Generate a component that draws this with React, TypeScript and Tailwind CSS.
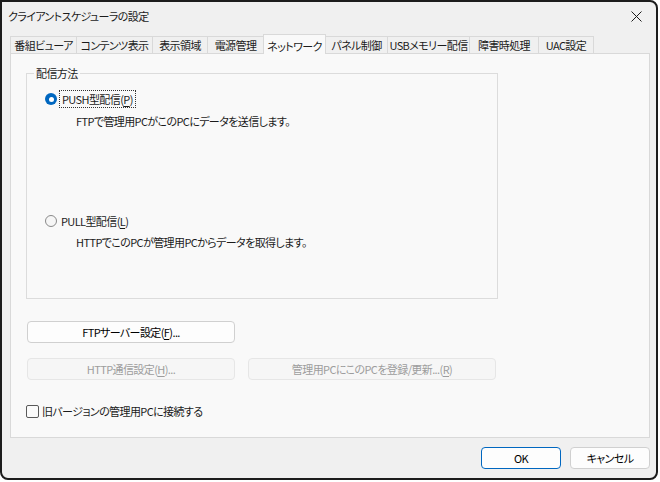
import type { ReactNode } from "react";

const tabs = [
  { label: "番組ビューア", width: 67 },
  { label: "コンテンツ表示", width: 77 },
  { label: "表示領域", width: 56 },
  { label: "電源管理", width: 57 },
  { label: "ネットワーク", width: 63 },
  { label: "パネル制御", width: 63 },
  { label: "USBメモリー配信", width: 83 },
  { label: "障害時処理", width: 70 },
  { label: "UAC設定", width: 56 },
];

const Key = ({ children }: { children: ReactNode }) => (
  <span className="underline underline-offset-2">{children}</span>
);

const Button = ({
  children,
  disabled,
  primary,
  className = "",
}: {
  children: ReactNode;
  disabled?: boolean;
  primary?: boolean;
  className?: string;
}) => (
  <div
    className={`flex h-[22px] items-center justify-center rounded-[4px] border ${
      disabled
        ? "border-[#e6e6e6] bg-[#f6f6f6] text-[#9d9d9d]"
        : primary
          ? "border-[#0067c0] bg-[#fdfdfd] text-black"
          : "border-[#d0d0d0] bg-[#fdfdfd] text-black"
    } ${className}`}
  >
    {children}
  </div>
);

export default function App() {
  return (
    <div className="h-[482px] w-[660px] whitespace-nowrap bg-white font-['Noto_Sans_CJK_JP',sans-serif] text-[11px] leading-[16px] tracking-[-0.6px] text-[#1b1b1b] [font-feature-settings:'palt']">
      <div className="flex h-[480px] w-[658px] flex-col overflow-hidden rounded-r-[8px] rounded-bl-[8px] border-2 border-[#1c1c1c] bg-[#f0f0f0]">
        {/* title bar */}
        <div className="flex h-[28px] shrink-0 items-center justify-between pl-[6px] pr-[14px]">
          <span>クライアントスケジューラの設定</span>
          <svg width="11" height="11" viewBox="0 0 11 11">
            <path d="M0.5 0.5 L10.5 10.5 M10.5 0.5 L0.5 10.5" stroke="#1c1c1c" strokeWidth="1" />
          </svg>
        </div>

        {/* tabs */}
        <div className="ml-[8px] mt-[6px] flex h-[17px] items-end">
          {tabs.map((tab) => {
            const active = tab.label === "ネットワーク";
            return (
              <div
                key={tab.label}
                style={{ width: tab.width }}
                className={`flex items-center justify-center border-x border-t border-[#d9d9d9] ${
                  active
                    ? "relative z-10 -mb-px -ml-px h-[20px] bg-[#f9f9f9] pt-[2px]"
                    : "-ml-px h-[17px] bg-[#f0f0f0] first:ml-0"
                }`}
              >
                <span>{tab.label}</span>
              </div>
            );
          })}
        </div>

        {/* tab page */}
        <div className="ml-[8px] flex h-[385px] w-[640px] flex-col border border-[#d9d9d9] bg-[#f9f9f9] pl-[15px]">
          <fieldset className="mt-[11px] h-[234px] w-[472px] border border-[#dcdcdc] pl-[18px]">
            <legend className="-ml-[11px] px-[2px]">配信方法</legend>

            <div className="mt-[9px] flex items-center">
              <span className="flex h-[12px] w-[12px] items-center justify-center rounded-full bg-[#0067c0]">
                <span className="h-[5px] w-[5px] rounded-full bg-white" />
              </span>
              <span className="ml-[2px] border border-dotted border-[#333] px-[2px]">
                PUSH型配信(<Key>P</Key>)
              </span>
            </div>
            <div className="ml-[31px] mt-[5px]">FTPで管理用PCがこのPCにデータを送信します。</div>

            <div className="mt-[84px] flex items-center">
              <span className="h-[12px] w-[12px] rounded-full border border-[#8a8a8a] bg-[#f6f6f6]" />
              <span className="ml-[3px] px-px">
                PULL型配信(<Key>L</Key>)
              </span>
            </div>
            <div className="ml-[31px] mt-[5px]">HTTPでこのPCが管理用PCからデータを取得します。</div>
          </fieldset>

          <Button className="ml-px mt-[22px] w-[208px]">
            <span>
              FTPサーバー設定(<Key>F</Key>)...
            </span>
          </Button>

          <div className="ml-px mt-[15px] flex gap-[13px]">
            <Button disabled className="w-[208px]">
              <span>
                HTTP通信設定(<Key>H</Key>)...
              </span>
            </Button>
            <Button disabled className="w-[248px]">
              <span>
                管理用PCにこのPCを登録/更新...(<Key>R</Key>)
              </span>
            </Button>
          </div>

          <div className="mt-[23px] flex items-center">
            <span className="h-[13px] w-[13px] rounded-[2px] border border-[#5a5a5a] bg-[#fbfbfb]" />
            <span className="ml-[3px]">旧バージョンの管理用PCに接続する</span>
          </div>
        </div>

        {/* footer */}
        <div className="mt-[9px] flex justify-end gap-[9px] pr-[6px]">
          <Button primary className="w-[80px]">
            OK
          </Button>
          <Button className="w-[80px]">キャンセル</Button>
        </div>
      </div>
    </div>
  );
}
